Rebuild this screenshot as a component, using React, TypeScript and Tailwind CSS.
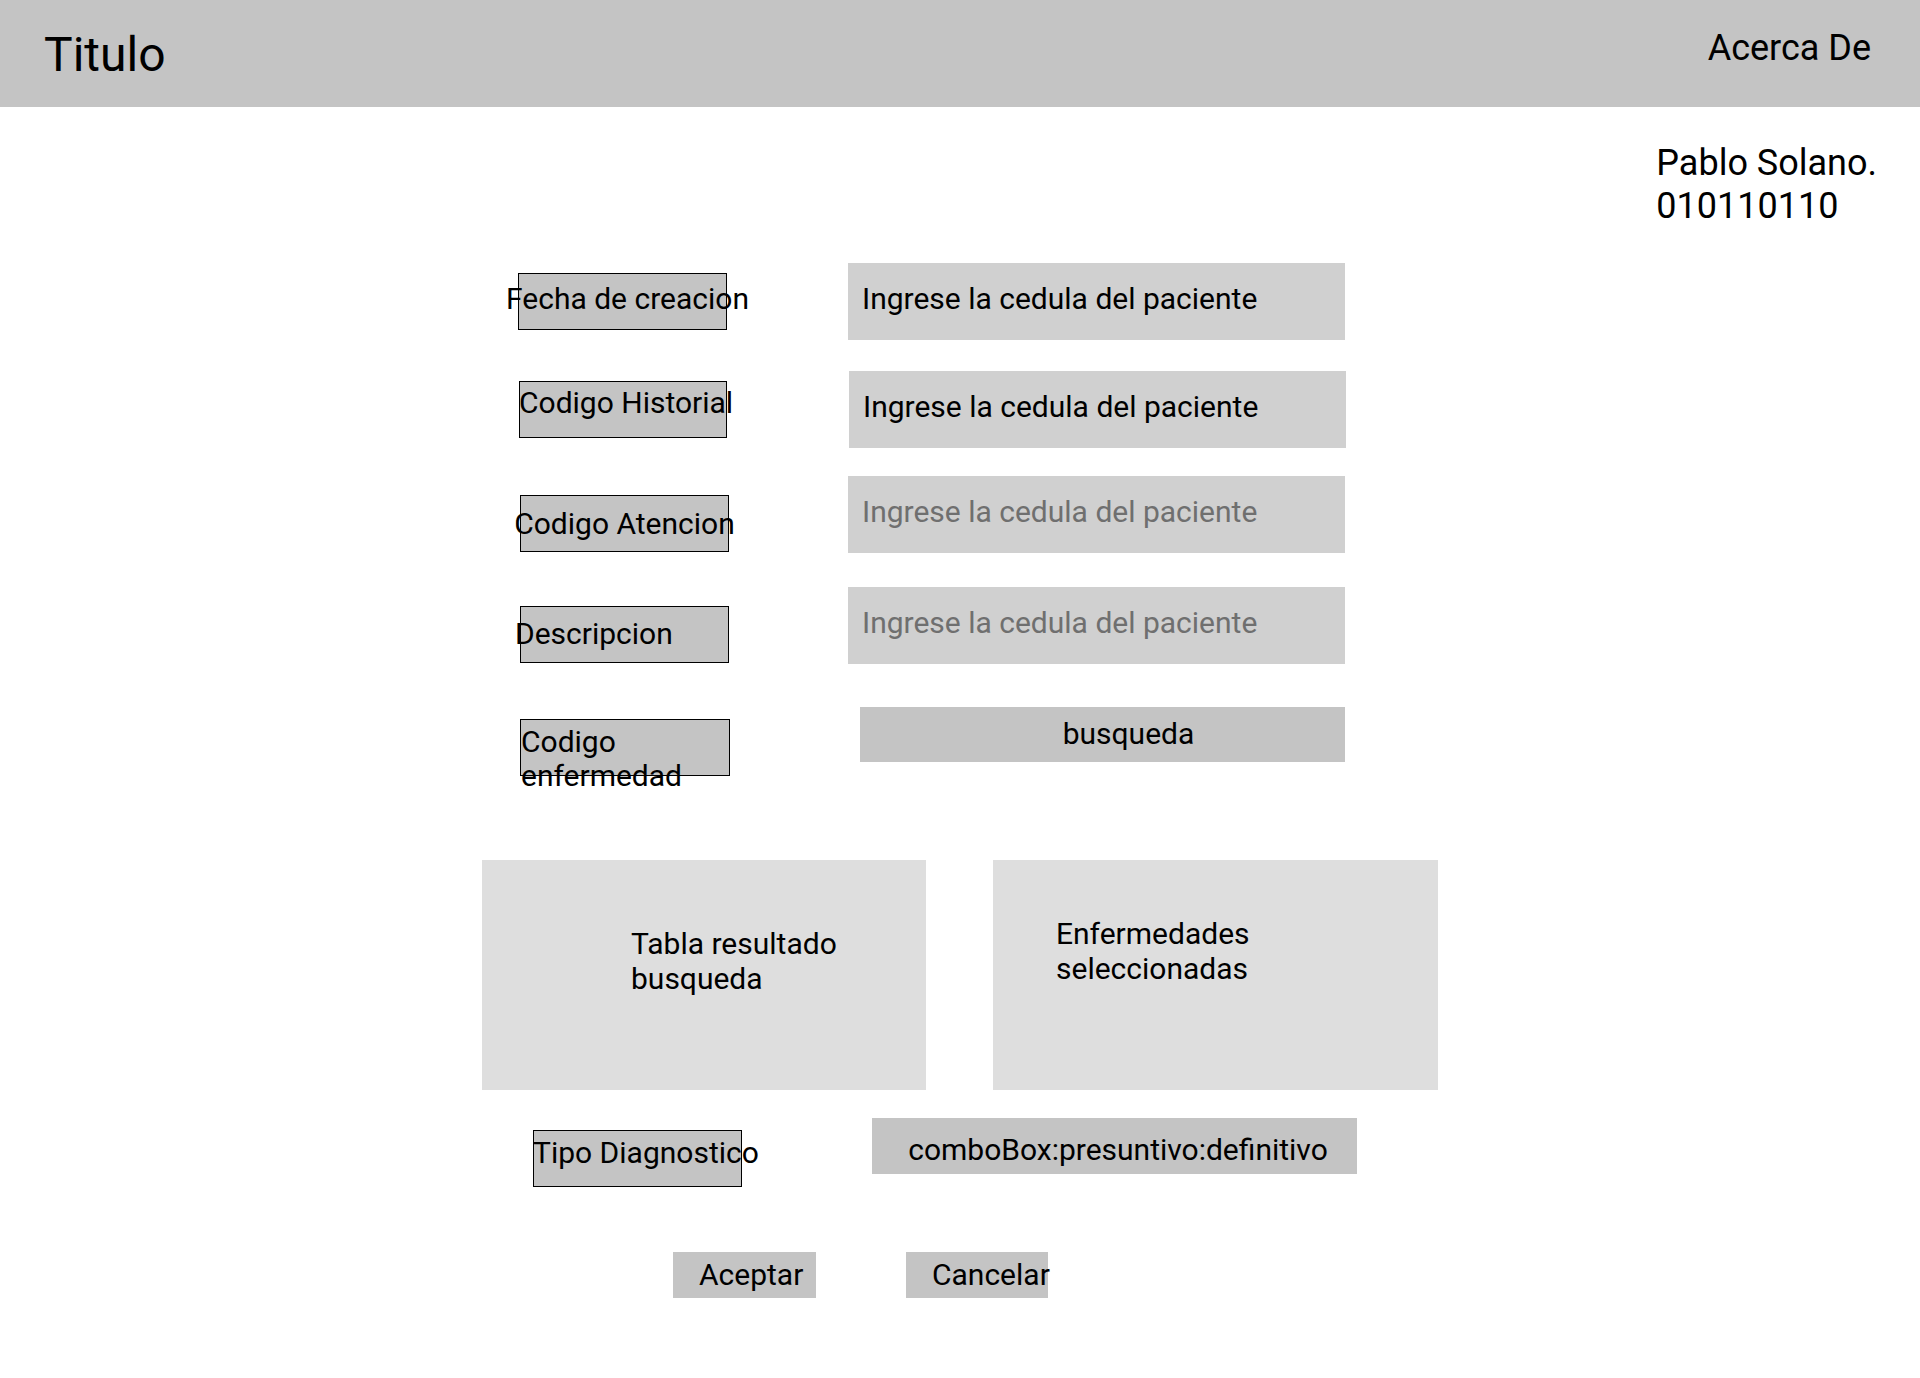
export default function App() {
  return (
    <div className="min-h-screen bg-white text-black font-['Roboto',sans-serif]">
      {/* Top bar */}
      <header className="h-[107px] bg-[#c4c4c4] flex items-start justify-between pt-[28px] pl-[44px] pr-[49px]">
        <h1 className="mt-[3px] text-[48px] leading-none">Titulo</h1>
        <a className="mt-[2px] text-[36px] leading-none">Acerca De</a>
      </header>

      <div className="flex justify-end pr-[43px] mt-[35px]">
        <p className="text-[36px] leading-[43px]">
          Pablo Solano.
          <br />
          010110110
        </p>
      </div>

      <main className="w-[956px] mx-auto mt-[35px]">
        {/* Field rows */}
        <div className="flex items-start">
          <Label className="ml-[36px] w-[209px] mt-[10px] pt-[10px] pl-[10px] justify-center">Fecha de creacion</Label>
          <Input className="ml-[121px]" text="Ingrese la cedula del paciente" />
        </div>

        <div className="flex items-start mt-[31px]">
          <Label className="ml-[37px] w-[208px] mt-[10px] pt-[6px]">
            <span className="-ml-[1px]">Codigo Historial</span>
          </Label>
          <Input className="ml-[122px]" text="Ingrese la cedula del paciente" />
        </div>

        <div className="flex items-start mt-[28px]">
          <Label className="ml-[38px] w-[209px] mt-[19px] pt-[13px] justify-center">Codigo Atencion</Label>
          <Input className="ml-[119px]" text="Ingrese la cedula del paciente" muted />
        </div>

        <div className="flex items-start mt-[34px]">
          <Label className="ml-[38px] w-[209px] mt-[19px] pt-[12px]">
            <span className="-ml-[6px]">Descripcion</span>
          </Label>
          <Input className="ml-[119px]" text="Ingrese la cedula del paciente" muted />
        </div>

        <div className="flex items-start mt-[43px]">
          <Label className="ml-[38px] w-[210px] mt-[12px] pt-[5px]" lineHeight="leading-[34px]">
            Codigo
            <br />
            enfermedad
          </Label>
          <button className="ml-[130px] w-[485px] h-[55px] bg-[#c4c4c4] text-[30px] leading-none pt-[12px] pl-[52px] flex justify-center items-start">
            busqueda
          </button>
        </div>

        {/* Result panels */}
        <div className="flex gap-[67px] mt-[84px]">
          <div className="w-[444px] h-[230px] bg-[#dedede] text-[30px] leading-[35px] pt-[66px] pl-[149px]">
            Tabla resultado
            <br />
            busqueda
          </div>
          <div className="w-[445px] h-[230px] bg-[#dedede] text-[30px] leading-[35px] pt-[56px] pl-[63px]">
            Enfermedades
            <br />
            seleccionadas
          </div>
        </div>

        <div className="flex items-start mt-[28px]">
          <Label className="ml-[51px] w-[209px] mt-[12px] pt-[7px]">
            <span className="-ml-[1px]">Tipo Diagnostico</span>
          </Label>
          <div className="ml-[130px] w-[485px] h-[56px] bg-[#c4c4c4] text-[30px] leading-none pt-[17px] pl-[7px] flex justify-center whitespace-nowrap">
            comboBox:presuntivo:definitivo
          </div>
        </div>

        {/* Actions */}
        <div className="flex mt-[65px] pb-[79px]">
          <button className="ml-[191px] w-[143px] h-[46px] bg-[#c4c4c4] text-[30px] leading-none pt-[8px] pl-[26px] flex items-start whitespace-nowrap">
            Aceptar
          </button>
          <button className="ml-[90px] w-[142px] h-[46px] bg-[#c4c4c4] text-[30px] leading-none pt-[8px] pl-[26px] flex items-start whitespace-nowrap">
            Cancelar
          </button>
        </div>
      </main>
    </div>
  )
}

function Label({
  children,
  className,
  lineHeight = "leading-none whitespace-nowrap",
}: {
  children: React.ReactNode
  className: string
  lineHeight?: string
}) {
  return (
    <div className={`shrink-0 flex h-[57px] border border-black bg-[#c4c4c4] text-[30px] ${lineHeight} ${className}`}>
      <div>{children}</div>
    </div>
  )
}

function Input({ text, muted, className }: { text: string; muted?: boolean; className: string }) {
  return (
    <div
      className={`shrink-0 w-[497px] h-[77px] bg-[#d0d0d0] text-[30px] leading-none pt-[21px] pl-[14px] whitespace-nowrap ${
        muted ? "text-[#6f6f6f]" : "text-black"
      } ${className}`}
    >
      {text}
    </div>
  )
}
